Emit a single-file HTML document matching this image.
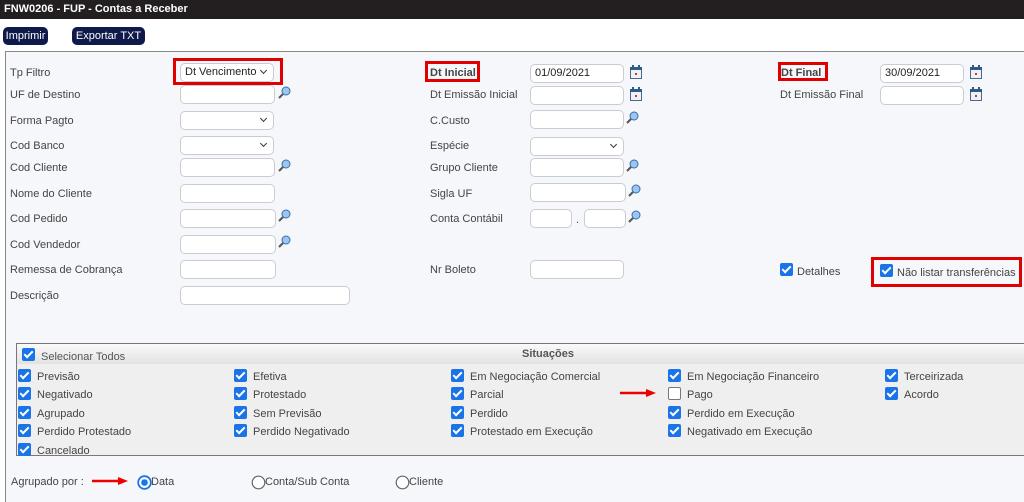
<!DOCTYPE html>
<html><head><meta charset="utf-8"><style>
*{box-sizing:border-box;margin:0;padding:0}
body{width:1024px;height:502px;overflow:hidden;background:#fff;font-family:"Liberation Sans",Arial,sans-serif;font-size:11px;color:#444;position:relative}
.a{position:absolute}
.t{position:absolute;white-space:nowrap;line-height:13px;margin-top:1px}
.in{position:absolute;height:19px;border:1px solid #c9cdd2;border-radius:5px;background:#fff;font-size:11px;color:#222;padding:2px 4px;line-height:13px}
.sel::after{content:"";position:absolute;right:7px;top:4px;width:4px;height:4px;border-right:1.3px solid #333;border-bottom:1.3px solid #333;transform:rotate(45deg)}
.red{position:absolute;border:3px solid #e00000}
.cb{position:absolute;width:13px;height:13px;border-radius:2px;background:#1a73e8}
.cb::after{content:"";position:absolute;left:4px;top:1px;width:3px;height:7px;border-right:2px solid #fff;border-bottom:2px solid #fff;transform:rotate(45deg)}
.cb.off{background:#fff;border:1px solid #777}
.cb.off::after{display:none}
.mag{position:absolute;width:14px;height:14px}
.cal{position:absolute;width:12px;height:14px}
</style></head><body>
<div class="a" style="left:0;top:0;width:1024px;height:19px;background:#231f20"></div>
<div class="t" style="left:4px;top:2px;color:#fff;font-weight:bold;font-size:11px">FNW0206 - FUP - Contas a Receber</div>
<div class="a" style="left:3px;top:27px;width:45px;height:18px;background:#0d1a4a;border-radius:5px;color:#fff;font-size:11px;line-height:18px;text-align:center">Imprimir</div>
<div class="a" style="left:72px;top:27px;width:73px;height:18px;background:#0d1a4a;border-radius:5px;color:#fff;font-size:11px;line-height:18px;text-align:center">Exportar TXT</div>
<div class="a" style="left:5px;top:51px;width:1019px;height:451px;background:#f5f7fb;border-left:1px solid #888;border-top:1px solid #888"></div>

<div class="t" style="left:10px;top:66px">Tp Filtro</div>
<div class="t" style="left:10px;top:88px">UF de Destino</div>
<div class="t" style="left:10px;top:114px">Forma Pagto</div>
<div class="t" style="left:10px;top:139px">Cod Banco</div>
<div class="t" style="left:10px;top:161px">Cod Cliente</div>
<div class="t" style="left:10px;top:187px">Nome do Cliente</div>
<div class="t" style="left:10px;top:212px">Cod Pedido</div>
<div class="t" style="left:10px;top:238px">Cod Vendedor</div>
<div class="t" style="left:10px;top:263px">Remessa de Cobrança</div>
<div class="t" style="left:10px;top:289px">Descrição</div>

<div class="red" style="left:173px;top:58px;width:110px;height:27px"></div>
<div class="in sel" style="left:180px;top:63px;width:94px">Dt Vencimento</div>
<div class="in" style="left:180px;top:85px;width:95px"></div>
<div class="in sel" style="left:180px;top:111px;width:94px"></div>
<div class="in sel" style="left:180px;top:136px;width:94px"></div>
<div class="in" style="left:180px;top:158px;width:95px"></div>
<div class="in" style="left:180px;top:184px;width:95px"></div>
<div class="in" style="left:180px;top:209px;width:96px"></div>
<div class="in" style="left:180px;top:235px;width:96px"></div>
<div class="in" style="left:180px;top:260px;width:96px"></div>
<div class="in" style="left:180px;top:286px;width:170px"></div>

<div class="red" style="left:425px;top:61px;width:55px;height:21px"></div>
<div class="t" style="left:430px;top:66px;font-weight:bold">Dt Inicial</div>
<div class="t" style="left:430px;top:88px">Dt Emissão Inicial</div>
<div class="t" style="left:430px;top:114px">C.Custo</div>
<div class="t" style="left:430px;top:139px">Espécie</div>
<div class="t" style="left:430px;top:161px">Grupo Cliente</div>
<div class="t" style="left:430px;top:187px">Sigla UF</div>
<div class="t" style="left:430px;top:212px">Conta Contábil</div>
<div class="t" style="left:430px;top:263px">Nr Boleto</div>
<div class="in" style="left:530px;top:64px;width:94px">01/09/2021</div>
<div class="in" style="left:530px;top:86px;width:94px"></div>
<div class="in" style="left:530px;top:110px;width:94px"></div>
<div class="in sel" style="left:530px;top:137px;width:94px"></div>
<div class="in" style="left:530px;top:158px;width:94px"></div>
<div class="in" style="left:530px;top:183px;width:96px"></div>
<div class="in" style="left:530px;top:209px;width:42px"></div>
<div class="t" style="left:576px;top:213px">.</div>
<div class="in" style="left:584px;top:209px;width:42px"></div>
<div class="in" style="left:530px;top:260px;width:94px"></div>

<div class="red" style="left:778px;top:62px;width:50px;height:19px"></div>
<div class="t" style="left:781px;top:66px;font-weight:bold">Dt Final</div>
<div class="t" style="left:780px;top:88px">Dt Emissão Final</div>
<div class="in" style="left:880px;top:64px;width:84px">30/09/2021</div>
<div class="in" style="left:880px;top:86px;width:84px"></div>

<div class="cb" style="left:780px;top:263px"></div>
<div class="t" style="left:797px;top:265px">Detalhes</div>
<div class="red" style="left:871px;top:257px;width:151px;height:30px"></div>
<div class="cb" style="left:880px;top:264px"></div>
<div class="t" style="left:897px;top:266px">Não listar transferências</div>

<svg width="0" height="0" style="position:absolute"><defs>
<g id="m"><line x1="2" y1="12" x2="6" y2="8" stroke="#555" stroke-width="2"/><circle cx="9" cy="5" r="4" fill="#9cc6f2" stroke="#3a6ea8" stroke-width="1"/></g>
<g id="c"><rect x="0.5" y="2.5" width="11" height="11" fill="#eef2f6" stroke="#4a6a8a"/><rect x="0" y="2" width="12" height="3" fill="#2e5c86"/><rect x="2" y="0" width="2" height="3" fill="#2e5c86"/><rect x="8" y="0" width="2" height="3" fill="#2e5c86"/><rect x="5" y="8" width="2" height="2" fill="#c33"/></g>
</defs></svg>
<svg class="mag" style="left:277px;top:86px"><use href="#m"/></svg>
<svg class="mag" style="left:277px;top:159px"><use href="#m"/></svg>
<svg class="mag" style="left:277px;top:209px"><use href="#m"/></svg>
<svg class="mag" style="left:277px;top:235px"><use href="#m"/></svg>
<svg class="mag" style="left:625px;top:111px"><use href="#m"/></svg>
<svg class="mag" style="left:625px;top:159px"><use href="#m"/></svg>
<svg class="mag" style="left:627px;top:184px"><use href="#m"/></svg>
<svg class="mag" style="left:627px;top:210px"><use href="#m"/></svg>
<svg class="cal" style="left:630px;top:65px"><use href="#c"/></svg>
<svg class="cal" style="left:630px;top:87px"><use href="#c"/></svg>
<svg class="cal" style="left:970px;top:65px"><use href="#c"/></svg>
<svg class="cal" style="left:970px;top:87px"><use href="#c"/></svg>

<div class="a" style="left:16px;top:343px;width:1010px;height:113px;background:#efefef;border:1px solid #777;border-right:none"></div>
<div class="a" style="left:17px;top:344px;width:1007px;height:20px;background:linear-gradient(#fafafa,#e2e2e2)"></div>
<div class="cb" style="left:22px;top:348px"></div>
<div class="t" style="left:41px;top:350px;color:#555">Selecionar Todos</div>
<div class="t" style="left:522px;top:347px;font-weight:bold;color:#555">Situações</div>

<div class="cb" style="left:18px;top:369px"></div><div class="t" style="left:37px;top:370px">Previsão</div>
<div class="cb" style="left:18px;top:387px"></div><div class="t" style="left:37px;top:388px">Negativado</div>
<div class="cb" style="left:18px;top:406px"></div><div class="t" style="left:37px;top:407px">Agrupado</div>
<div class="cb" style="left:18px;top:424px"></div><div class="t" style="left:37px;top:425px">Perdido Protestado</div>
<div class="cb" style="left:18px;top:443px"></div><div class="t" style="left:37px;top:444px">Cancelado</div>

<div class="cb" style="left:234px;top:369px"></div><div class="t" style="left:253px;top:370px">Efetiva</div>
<div class="cb" style="left:234px;top:387px"></div><div class="t" style="left:253px;top:388px">Protestado</div>
<div class="cb" style="left:234px;top:406px"></div><div class="t" style="left:253px;top:407px">Sem Previsão</div>
<div class="cb" style="left:234px;top:424px"></div><div class="t" style="left:253px;top:425px">Perdido Negativado</div>

<div class="cb" style="left:451px;top:369px"></div><div class="t" style="left:470px;top:370px">Em Negociação Comercial</div>
<div class="cb" style="left:451px;top:387px"></div><div class="t" style="left:470px;top:388px">Parcial</div>
<div class="cb" style="left:451px;top:406px"></div><div class="t" style="left:470px;top:407px">Perdido</div>
<div class="cb" style="left:451px;top:424px"></div><div class="t" style="left:470px;top:425px">Protestado em Execução</div>

<div class="cb" style="left:668px;top:369px"></div><div class="t" style="left:687px;top:370px">Em Negociação Financeiro</div>
<div class="cb off" style="left:668px;top:387px"></div><div class="t" style="left:687px;top:388px">Pago</div>
<div class="cb" style="left:668px;top:406px"></div><div class="t" style="left:687px;top:407px">Perdido em Execução</div>
<div class="cb" style="left:668px;top:424px"></div><div class="t" style="left:687px;top:425px">Negativado em Execução</div>

<div class="cb" style="left:885px;top:369px"></div><div class="t" style="left:904px;top:370px">Terceirizada</div>
<div class="cb" style="left:885px;top:387px"></div><div class="t" style="left:904px;top:388px">Acordo</div>

<svg class="a" style="left:620px;top:388px" width="36" height="10"><line x1="0" y1="5" x2="28" y2="5" stroke="#e00" stroke-width="2.5"/><polygon points="26,1 36,5 26,9" fill="#e00"/></svg>

<div class="t" style="left:11px;top:475px">Agrupado por :</div>
<svg class="a" style="left:92px;top:476px" width="36" height="10"><line x1="0" y1="5" x2="28" y2="5" stroke="#e00" stroke-width="2.5"/><polygon points="26,1 36,5 26,9" fill="#e00"/></svg>
<svg class="a" style="left:137px;top:475px" width="15" height="15"><circle cx="7.5" cy="7.5" r="6.3" fill="#fff" stroke="#1a73e8" stroke-width="1.8"/><circle cx="7.5" cy="7.5" r="3.3" fill="#1a73e8"/></svg>
<div class="t" style="left:151px;top:475px">Data</div>
<svg class="a" style="left:251px;top:475px" width="15" height="15"><circle cx="7.5" cy="7.5" r="6.3" fill="#fff" stroke="#666" stroke-width="1.2"/></svg>
<div class="t" style="left:265px;top:475px">Conta/Sub Conta</div>
<svg class="a" style="left:395px;top:475px" width="15" height="15"><circle cx="7.5" cy="7.5" r="6.3" fill="#fff" stroke="#666" stroke-width="1.2"/></svg>
<div class="t" style="left:409px;top:475px">Cliente</div>
</body></html>
